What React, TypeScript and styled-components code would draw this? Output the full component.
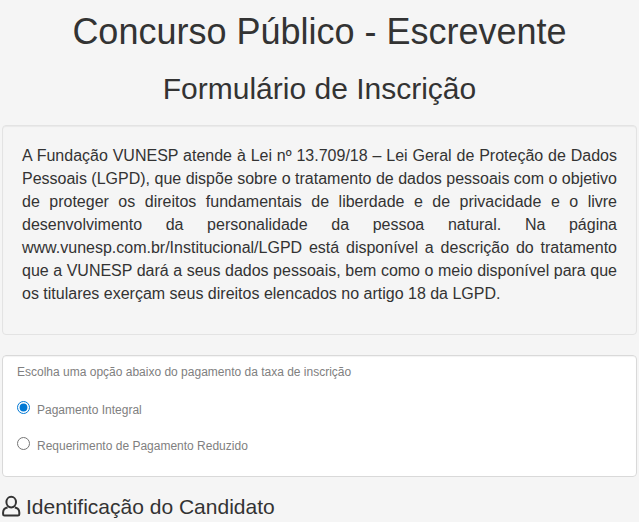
import React, { useState } from "react";
import styled, { createGlobalStyle } from "styled-components";

const GlobalStyle = createGlobalStyle`
  *, *::before, *::after { box-sizing: border-box; }
  body {
    margin: 0;
    background: #f5f5f5;
    color: #333;
    font-family: "Liberation Sans", Arial, sans-serif;
    font-size: 14px;
    line-height: 20px;
    overflow-x: hidden;
  }
`;

const Page = styled.main`
  padding: 12px 2px 0;
`;

const Title = styled.h1`
  margin: 0 0 18px;
  font-size: 36px;
  font-weight: 400;
  line-height: 40px;
  text-align: center;
`;

const Subtitle = styled.h2`
  margin: 0 0 18px;
  font-size: 30px;
  font-weight: 400;
  line-height: 37px;
  text-align: center;
`;

const Well = styled.section`
  margin-bottom: 20px;
  padding: 18px 19px 29px;
  background: #f5f5f5;
  border: 1px solid #e3e3e3;
  border-radius: 4px;
  box-shadow: inset 0 1px 1px rgba(0, 0, 0, 0.05);
`;

const Notice = styled.p`
  margin: 0;
  font-size: 16px;
  line-height: 23px;
  text-align: justify;
`;

const Panel = styled.fieldset`
  display: flex;
  flex-direction: column;
  gap: 18px;
  margin: 0 0 18px;
  padding: 7px 14px 21px;
  background: #fff;
  border: 1px solid #d9d9d9;
  border-radius: 4px;
  box-shadow: inset 0 1px 1px rgba(0, 0, 0, 0.05);
  color: #808080;
  font-size: 12px;
  line-height: 18px;
`;

const Legend = styled.legend`
  float: left;
  margin-bottom: 2px;
  padding: 0;
`;

const Option = styled.label`
  display: flex;
  align-items: flex-start;
  gap: 7px;
`;

const Radio = styled.input`
  width: 13px;
  height: 13px;
  margin: 0;
  accent-color: #0078d4;
`;

const SectionTitle = styled.h3`
  display: flex;
  align-items: flex-start;
  gap: 5px;
  margin: 0;
  font-size: 21px;
  font-weight: 400;
  line-height: 24px;
`;

const UserIcon = styled.svg`
  flex: none;
  width: 19px;
  height: 22px;
  fill: none;
  stroke: currentColor;
  stroke-width: 2;
  stroke-linejoin: round;
`;

const options = ["Pagamento Integral", "Requerimento de Pagamento Reduzido"];

export default function App() {
  const [selected, setSelected] = useState(options[0]);
  return (
    <Page>
      <GlobalStyle />
      <Title>Concurso Público - Escrevente</Title>
      <Subtitle>Formulário de Inscrição</Subtitle>
      <Well>
        <Notice>
          A Fundação VUNESP atende à Lei nº 13.709/18 – Lei Geral de Proteção de Dados Pessoais
          (LGPD), que dispõe sobre o tratamento de dados pessoais com o objetivo de proteger os
          direitos fundamentais de liberdade e de privacidade e o livre desenvolvimento da
          personalidade da pessoa natural. Na página www.vunesp.com.br/Institucional/LGPD está
          disponível a descrição do tratamento que a VUNESP dará a seus dados pessoais, bem como o
          meio disponível para que os titulares exerçam seus direitos elencados no artigo 18 da
          LGPD.
        </Notice>
      </Well>
      <Panel>
        <Legend>Escolha uma opção abaixo do pagamento da taxa de inscrição</Legend>
        {options.map((option) => (
          <Option key={option}>
            <Radio
              type="radio"
              name="pagamento"
              value={option}
              checked={selected === option}
              onChange={() => setSelected(option)}
            />
            {option}
          </Option>
        ))}
      </Panel>
      <SectionTitle>
        <UserIcon viewBox="0 0 19 22" aria-hidden="true">
          <ellipse cx="9.2" cy="7.1" rx="4.8" ry="5.3" />
          <path d="M5.6 12.4 C2.6 13 1.1 14.8 1.1 17.4 V19.2 Q1.1 20.6 2.5 20.6 H15.9 Q17.3 20.6 17.3 19.2 V17.4 C17.3 14.8 15.8 13 12.8 12.4" />
        </UserIcon>
        Identificação do Candidato
      </SectionTitle>
    </Page>
  );
}
